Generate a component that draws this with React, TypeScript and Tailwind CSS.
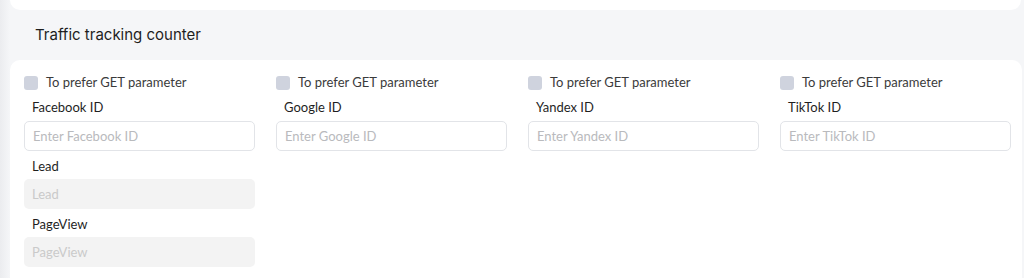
import React from "react";

const cols = [
  { label: "Facebook ID", ph: "Enter Facebook ID", extra: true },
  { label: "Google ID", ph: "Enter Google ID", extra: false },
  { label: "Yandex ID", ph: "Enter Yandex ID", extra: false },
  { label: "TikTok ID", ph: "Enter TikTok ID", extra: false },
];

const body = { fontFamily: "Lato, 'Noto Sans', sans-serif" };

function Column({ label, ph, extra }: { label: string; ph: string; extra: boolean }) {
  return (
    <div className="flex w-[231px] flex-col" style={body}>
      <label className="flex h-5 items-center gap-[8px]">
        <span className="h-[14px] w-[14px] rounded-[3px] bg-[#cfd3de]" />
        <span className="text-[13px] text-[#3b3b3b]">To prefer GET parameter</span>
      </label>
      <div className="mt-1 h-5 pl-2 text-[13px] leading-5 text-[#1f1f1f]">{label}</div>
      <input
        style={body}
        className="mt-1 h-[30px] w-full rounded-[5px] border border-[#e2e4e8] bg-white px-2 text-[13px] text-[#333] placeholder:text-[#b9babd] outline-none"
        placeholder={ph}
      />
      {extra && (
        <>
          <div className="mt-[5px] h-5 pl-2 text-[13px] leading-5 text-[#1f1f1f]">Lead</div>
          <input
            disabled
            style={body}
            className="mt-[3px] h-[30px] w-full rounded-[5px] bg-[#f3f3f3] px-2 text-[13px] placeholder:text-[#cacaca] outline-none"
            placeholder="Lead"
          />
          <div className="mt-[5px] h-5 pl-2 text-[13px] leading-5 text-[#1f1f1f]">PageView</div>
          <input
            disabled
            style={body}
            className="mt-[3px] h-[30px] w-full rounded-[5px] bg-[#f3f3f3] px-2 text-[13px] placeholder:text-[#cacaca] outline-none"
            placeholder="PageView"
          />
        </>
      )}
    </div>
  );
}

export default function App() {
  return (
    <div
      className="flex h-[278px] w-[1024px] overflow-hidden bg-[#f5f6f8]"
      style={{ fontFamily: "Inter, 'Noto Sans', sans-serif" }}
    >
      <div className="w-[10px] bg-gradient-to-r from-[#ebecef] to-[#f5f6f8]" />
      <div className="flex flex-1 flex-col">
        <div className="mr-[3px] h-[10px] rounded-b-[10px] bg-white" />
        <div className="flex h-[50px] items-center pl-[25px] text-[15px] text-[#1e1e1e]">
          Traffic tracking counter
        </div>
        <div className="mr-[2px] flex flex-1 gap-[21px] rounded-t-[10px] bg-white pl-[14px] pt-[13px]">
          {cols.map((c) => (
            <Column key={c.label} {...c} />
          ))}
        </div>
      </div>
    </div>
  );
}
